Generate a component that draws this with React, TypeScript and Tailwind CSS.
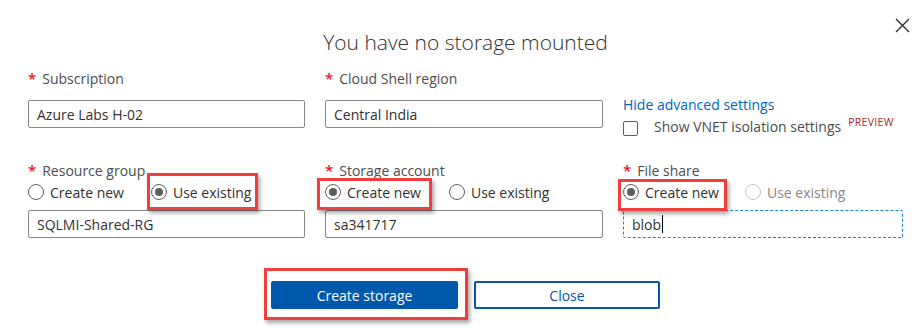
import React from "react";

const font = { fontFamily: '"Open Sans", "Noto Sans", sans-serif' };

function Label({ text }: { text: string }) {
  return (
    <div className="flex items-baseline text-[14px] text-[#4d4d4d] leading-[16px]">
      <span className="text-[#e81123] mr-[6px] text-[15px] font-semibold">*</span>
      {text}
    </div>
  );
}

function Radio({ label, checked, disabled }: { label: string; checked?: boolean; disabled?: boolean }) {
  return (
    <span className="flex items-center gap-[6px] h-[20px]">
      <span
        className={`w-[16px] h-[16px] rounded-full border flex items-center justify-center bg-white ${
          disabled ? "border-[#c8c6c4]" : "border-[#605e5c]"
        }`}
      >
        {checked && <span className="w-[8px] h-[8px] rounded-full bg-[#605e5c]" />}
      </span>
      <span className={`text-[14px] ${disabled ? "text-[#8a8886]" : "text-[#323130]"}`}>{label}</span>
    </span>
  );
}

function Highlight({ className }: { className: string }) {
  return (
    <div
      className={`absolute border-[3px] border-[#ee3e3e] shadow-[2px_3px_4px_rgba(0,0,0,0.35)] pointer-events-none ${className}`}
    />
  );
}

function TextBox({ value, focused }: { value: string; focused?: boolean }) {
  return (
    <div
      className={`h-[28px] flex items-center pl-[8px] text-[14px] text-[#323130] rounded-[2px] ${
        focused ? "border border-dashed border-[#1a86c8]" : "border border-[#8a8886]"
      }`}
    >
      {value}
      {focused && <span className="w-px h-[18px] bg-black ml-px" />}
    </div>
  );
}

export default function App() {
  return (
    <div className="relative w-[912px] h-[334px] bg-white" style={font}>
      <button className="absolute left-[895px] top-[18px] w-[15px] h-[15px]" aria-label="Close">
        <svg viewBox="0 0 15 15" className="w-[15px] h-[15px]">
          <path d="M1 1 L14 14 M14 1 L1 14" stroke="#323130" strokeWidth="1.4" fill="none" />
        </svg>
      </button>

      <div className="ml-[28px] w-[875px] pt-[28px]">
        <h1 className="text-center font-light text-[21px] leading-[28px] text-[#323130]">
          You have no storage mounted
        </h1>

        {/* first row */}
        <div className="grid grid-cols-[277px_278px_280px] gap-x-[20px] mt-[14px]">
          <div>
            <Label text="Subscription" />
            <div className="mt-[13px]">
              <TextBox value="Azure Labs H-02" />
            </div>
          </div>
          <div>
            <Label text="Cloud Shell region" />
            <div className="mt-[13px]">
              <TextBox value="Central India" />
            </div>
          </div>
          <div className="pt-[26px]">
            <a className="block text-[14px] leading-[18px] text-[#0067b8]">Hide advanced settings</a>
            <div className="flex items-center mt-[2px]">
              <span className="w-[15px] h-[15px] border border-[#605e5c] rounded-[2px] mt-[3px]" />
              <span className="ml-[16px] text-[14px] text-[#4d4d4d]">Show VNET isolation settings</span>
              <span className="ml-[7px] text-[10.5px] text-[#a4262c] self-start leading-[12px] tracking-[0.3px]">
                PREVIEW
              </span>
            </div>
          </div>
        </div>

        {/* second row */}
        <div className="grid grid-cols-[277px_278px_280px] gap-x-[20px] mt-[25px]">
          <div>
            <Label text="Resource group" />
            <div className="flex gap-[27px] mt-[3px]">
              <Radio label="Create new" />
              <span className="relative">
                <Radio label="Use existing" checked />
                <Highlight className="left-[-4px] right-[-7px] top-[-9px] bottom-[-8px]" />
              </span>
            </div>
            <div className="mt-[8px]">
              <TextBox value="SQLMI-Shared-RG" />
            </div>
          </div>
          <div>
            <Label text="Storage account" />
            <div className="flex gap-[28px] mt-[3px]">
              <span className="relative">
                <Radio label="Create new" checked />
                <Highlight className="left-[-8px] right-[-11px] top-[-4px] bottom-[-8px]" />
              </span>
              <Radio label="Use existing" />
            </div>
            <div className="mt-[8px]">
              <TextBox value="sa341717" />
            </div>
          </div>
          <div>
            <Label text="File share" />
            <div className="flex gap-[26px] mt-[3px]">
              <span className="relative">
                <Radio label="Create new" checked />
                <Highlight className="left-[-5px] right-[-8px] top-[-3px] bottom-[-9px]" />
              </span>
              <Radio label="Use existing" disabled />
            </div>
            <div className="mt-[8px]">
              <TextBox value="blob" focused />
            </div>
          </div>
        </div>

        {/* buttons */}
        <div className="flex justify-center gap-[16px] mt-[43px]">
          <span className="relative">
            <button className="w-[187px] h-[28px] bg-[#0058ad] text-white text-[14px] rounded-[2px]">
              Create storage
            </button>
            <Highlight className="left-[-7px] right-[-10px] top-[-13px] bottom-[-11px]" />
          </span>
          <button className="w-[186px] h-[28px] border-2 border-[#0058ad] text-[#0058ad] text-[14px] rounded-[2px] bg-white">
            Close
          </button>
        </div>
      </div>
    </div>
  );
}
